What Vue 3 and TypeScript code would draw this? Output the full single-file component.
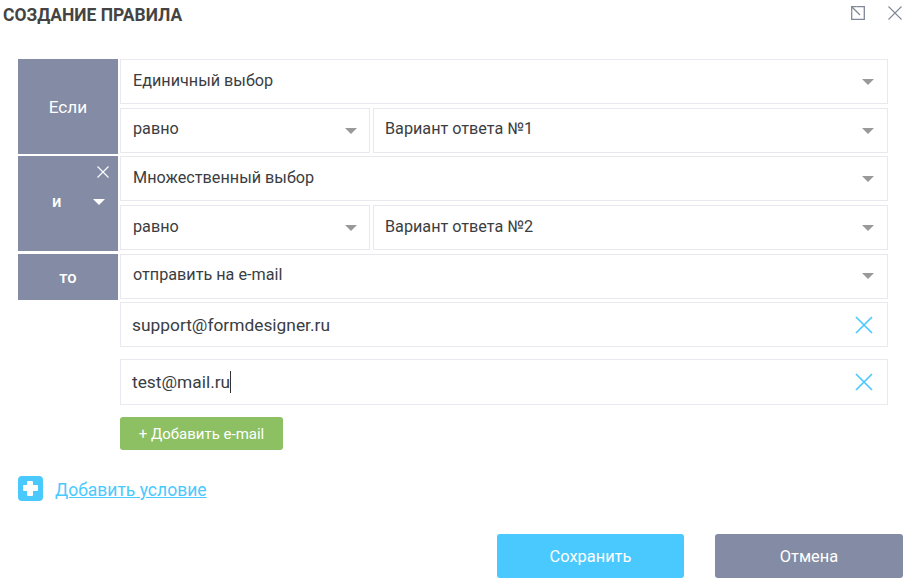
<script setup lang="ts">
const rules = [
  { first: 'Единичный выбор', value: 'Вариант ответа №1' },
  { first: 'Множественный выбор', value: 'Вариант ответа №2' },
]
const emails = ['support@formdesigner.ru', 'test@mail.ru']
</script>

<template>
  <div class="dialog">
    <header class="head">
      <h1>Создание правила</h1>
      <div class="head-icons">
        <svg width="14" height="14" viewBox="0 0 14 14" fill="none" stroke="#7f8799" stroke-width="1.3">
          <path d="M5.5 .7H13.3V13.3H.7V5.5" />
          <path d="M1 1L9 9" />
          <path d="M.7 5.5V.7H5.5" />
        </svg>
        <svg width="14" height="14" viewBox="0 0 14 14" fill="none" stroke="#7f8799" stroke-width="1.1">
          <path d="M.5 .5L13.5 13.5M13.5 .5L.5 13.5" />
        </svg>
      </div>
    </header>

    <section class="rules">
      <div v-for="(r, i) in rules" :key="r.first" class="block" :class="{ lead: i === 0 }">
        <div class="label" :class="{ dropdown: i === 1 }">
          <template v-if="i === 0">Если</template>
          <template v-else>
            <svg class="remove" width="12" height="12" viewBox="0 0 12 12" fill="none" stroke="#fff" stroke-width="1.1">
              <path d="M.5 .5L11.5 11.5M11.5 .5L.5 11.5" />
            </svg>
            <span class="and">и</span>
            <span class="tri white"></span>
          </template>
        </div>
        <div class="fields">
          <div class="field"><span>{{ r.first }}</span><span class="tri"></span></div>
          <div class="pair">
            <div class="field op"><span>равно</span><span class="tri"></span></div>
            <div class="field val"><span>{{ r.value }}</span><span class="tri"></span></div>
          </div>
        </div>
      </div>

      <div class="block then">
        <div class="label to">то</div>
        <div class="fields">
          <div class="field"><span>отправить на e-mail</span><span class="tri"></span></div>
          <div class="emails">
            <div v-for="(e, i) in emails" :key="e" class="field email" :class="{ tall: i === 1 }">
              <span class="addr">{{ e }}<i v-if="i === 1" class="caret"></i></span>
              <svg width="18" height="18" viewBox="0 0 18 18" fill="none" stroke="#4ac9ff" stroke-width="1.7">
                <path d="M1 1L17 17M17 1L1 17" />
              </svg>
            </div>
          </div>
          <button class="add-mail" type="button">+ Добавить e-mail</button>
        </div>
      </div>
    </section>

    <div class="add-cond">
      <span class="plus"></span>
      <a href="#">Добавить условие</a>
    </div>

    <footer class="foot">
      <button class="btn save" type="button">Сохранить</button>
      <button class="btn cancel" type="button">Отмена</button>
    </footer>
  </div>
</template>

<style scoped>
.dialog {
  width: 907px;
  height: 581px;
  box-sizing: border-box;
  padding: 0 4px 0 0;
  background: #fff;
  font-family: Roboto, "Noto Sans", sans-serif;
  font-size: 16.2px;
  color: #3a3d42;
  overflow: hidden;
}
.head {
  display: flex;
  justify-content: space-between;
  align-items: center;
  height: 30px;
  padding-left: 3px;
}
.head h1 {
  margin: 0;
  font-size: 17.45px;
  line-height: 30px;
  font-weight: 700;
  text-transform: uppercase;
  color: #444;
}
.head-icons {
  display: flex;
  gap: 23px;
  margin-top: -4px;
  margin-right: 1px;
}
.head-icons svg { display: block; }
.rules {
  margin: 29px 0 0 18px;
  width: 870px;
  display: flex;
  flex-direction: column;
  gap: 2px;
}
.block {
  display: grid;
  grid-template-columns: 100px 768px;
  column-gap: 2px;
  align-items: start;
}
.then { margin-top: 1px; }
.label {
  position: relative;
  height: 95px;
  background: #838ca4;
  color: #fff;
  font-size: 17.2px;
  display: flex;
  align-items: center;
  justify-content: center;
}
.label.to {
  height: 46px;
  font-weight: 500;
  font-size: 16.5px;
}
.remove {
  position: absolute;
  top: 10px;
  right: 9px;
}
.and {
  position: absolute;
  left: 34px;
  top: 36px;
  font-weight: 500;
  font-size: 16.5px;
}
.label .tri.white {
  position: absolute;
  left: 75px;
  top: 43px;
  border-top-color: #fff;
}
.fields {
  display: flex;
  flex-direction: column;
  gap: 4px;
  min-width: 0;
}
.pair {
  display: flex;
  gap: 3px;
}
.field {
  box-sizing: border-box;
  height: 45px;
  border: 1px solid #e8e8ee;
  padding: 0 13px 2px 12px;
  display: flex;
  align-items: center;
  justify-content: space-between;
  line-height: 40px;
  background: #fff;
}
.field .tri { margin-top: 2px; }
.lead .pair .field { padding-bottom: 4px; }
.lead .pair .tri { margin-top: 4px; }
.then .fields > .field { padding-bottom: 3px; }
.op { width: 250px; padding-right: 12px; }
.val { flex: 1; padding-left: 11px; }
.tri {
  width: 0;
  height: 0;
  border-left: 6px solid transparent;
  border-right: 6px solid transparent;
  border-top: 6px solid #999;
}
.emails {
  display: flex;
  flex-direction: column;
  gap: 12px;
  margin-top: -1px;
}
.email {
  font-size: 17.35px;
  padding: 0 14px 0 11px;
}
.email.tall { height: 46px; }
.addr {
  position: relative;
  display: inline-block;
}
.caret {
  position: absolute;
  right: -1px;
  top: 9px;
  width: 1px;
  height: 22px;
  background: #333;
}
.add-mail {
  width: 163px;
  height: 33px;
  margin-top: 8px;
  border: 0;
  border-radius: 3px;
  background: #8cc063;
  color: #fff;
  font: 400 15px Roboto, sans-serif;
  padding: 0;
}
.add-cond {
  display: flex;
  align-items: center;
  gap: 12px;
  margin: 26px 0 0 18px;
  height: 25px;
  line-height: 27px;
}
.plus {
  position: relative;
  width: 25px;
  height: 25px;
  border-radius: 4px;
  background: #4ac9ff;
}
.plus::before,
.plus::after {
  content: "";
  position: absolute;
  background: #fff;
  border-radius: 1px;
}
.plus::before { left: 5px; top: 9px; width: 15px; height: 6px; }
.plus::after { left: 9px; top: 5px; width: 6px; height: 15px; }
.add-cond a {
  color: #4ac9ff;
  font-size: 17.5px;
  text-decoration: underline;
  padding-top: 4px;
}
.foot {
  display: flex;
  justify-content: flex-end;
  gap: 31px;
  margin-top: 33px;
}
.btn {
  height: 44px;
  border: 0;
  border-radius: 3px;
  color: #fff;
  font: 400 16.4px Roboto, sans-serif;
  padding: 0;
}
.save { width: 187px; background: #4ac9ff; }
.cancel { width: 188px; background: #838ca4; }
</style>
